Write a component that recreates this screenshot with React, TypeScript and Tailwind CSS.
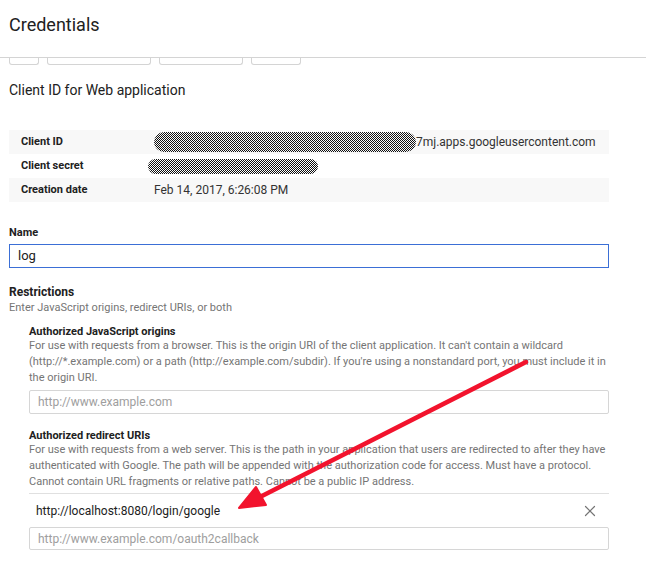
import { X } from 'lucide-react';

const Scribble = ({ width, height }: { width: number; height: number }) => (
  <svg width={width} height={height} className="shrink-0">
    <defs>
      <pattern id={`dots-${width}`} width="2" height="2" patternUnits="userSpaceOnUse">
        <rect x="0" y="0" width="1" height="1" fill="#111" />
        <rect x="1" y="1" width="1" height="1" fill="#111" />
      </pattern>
    </defs>
    <rect x="0" y="0" width={width} height={height} rx={height / 2} fill={`url(#dots-${width})`} />
  </svg>
);

const InfoRow = ({ label, shaded, children }: { label: string; shaded?: boolean; children: React.ReactNode }) => (
  <div className={`flex h-6 items-center ${shaded ? 'bg-[#f8f8f8]' : ''}`}>
    <div className="w-[145px] pl-3 text-[11px] font-bold text-[#212121]">{label}</div>
    <div className="flex items-center text-[12px] text-[#333]">{children}</div>
  </div>
);

const App = () => {
  return (
    <div className="relative h-[565px] w-[646px] overflow-hidden bg-white font-['Roboto',sans-serif] text-[#212121]">
      <header className="h-[58px] border-b border-[#d4d4d4] pl-[9px] pt-[14px]">
        <h1 className="text-[18px] leading-[22px] text-[#212121]">Credentials</h1>
      </header>

      <div className="flex gap-2 pl-[9px]">
        <div className="h-[7px] w-[30px] rounded-b-[3px] border border-t-0 border-[#d4d4d4]" />
        <div className="h-[7px] w-[104px] rounded-b-[3px] border border-t-0 border-[#d4d4d4]" />
        <div className="h-[7px] w-[84px] rounded-b-[3px] border border-t-0 border-[#d4d4d4]" />
        <div className="h-[7px] w-[50px] rounded-b-[3px] border border-t-0 border-[#d4d4d4]" />
      </div>

      <main className="w-[609px] pl-[9px]">
        <h2 className="mt-[16px] text-[14px] leading-[18px] text-[#212121]">Client ID for Web application</h2>

        <div className="mt-[31px]">
          <InfoRow label="Client ID" shaded>
            <Scribble width={262} height={20} />
            <span>7mj.apps.googleusercontent.com</span>
          </InfoRow>
          <InfoRow label="Client secret">
            <span className="-ml-[6px]">
              <Scribble width={170} height={15} />
            </span>
          </InfoRow>
          <InfoRow label="Creation date" shaded>
            <span>Feb 14, 2017, 6:26:08 PM</span>
          </InfoRow>
        </div>

        <label className="mt-[23px] block text-[11px] font-bold leading-[16px]">Name</label>
        <div className="mt-[3px] flex h-[24px] items-center border border-[#3b6fd6] px-2 text-[13px]">log</div>

        <div className="mt-[16px] text-[12px] font-bold leading-[16px]">Restrictions</div>
        <div className="text-[11px] leading-[16px] text-[#757575]">Enter JavaScript origins, redirect URIs, or both</div>

        <section className="mt-[10px] pl-[20px]">
          <div className="text-[11px] font-bold leading-[12px]">Authorized JavaScript origins</div>
          <p className="text-[11px] leading-[16px] text-[#757575]">
            For use with requests from a browser. This is the origin URI of the client application. It can't contain a wildcard
            <br />
            (http://*.example.com) or a path (http://example.com/subdir). If you're using a nonstandard port, you must include it in
            <br />
            the origin URI.
          </p>
          <div className="mt-[4px] flex h-[24px] items-center rounded-[2px] border border-[#d6d6d6] px-2 text-[12px] text-[#9e9e9e]">
            http://www.example.com
          </div>

          <div className="mt-[16px] text-[11px] font-bold leading-[12px]">Authorized redirect URIs</div>
          <p className="text-[11px] leading-[16px] text-[#757575]">
            For use with requests from a web server. This is the path in your application that users are redirected to after they have
            <br />
            authenticated with Google. The path will be appended with the authorization code for access. Must have a protocol.
            <br />
            Cannot contain URL fragments or relative paths. Cannot be a public IP address.
          </p>
          <div className="mt-[3px] flex h-[34px] items-center justify-between border-t border-[#e0e0e0] pl-[7px] pr-[10px] text-[12px] text-[#212121]">
            <span>http://localhost:8080/login/google</span>
            <X size={18} strokeWidth={1.6} className="text-[#757575]" />
          </div>
          <div className="flex h-[23px] items-center rounded-[2px] border border-[#d6d6d6] px-2 text-[12px] text-[#9e9e9e]">
            http://www.example.com/oauth2callback
          </div>
        </section>
      </main>

      <svg className="pointer-events-none absolute left-0 top-0" width="646" height="565">
        <line x1="526" y1="362" x2="258" y2="498" stroke="#f2132d" strokeWidth="4.5" strokeLinecap="round" />
        <polygon points="239,508 256,487 266,505" fill="#f2132d" stroke="#f2132d" strokeWidth="2" strokeLinejoin="round" />
      </svg>
    </div>
  );
};

export default App;
